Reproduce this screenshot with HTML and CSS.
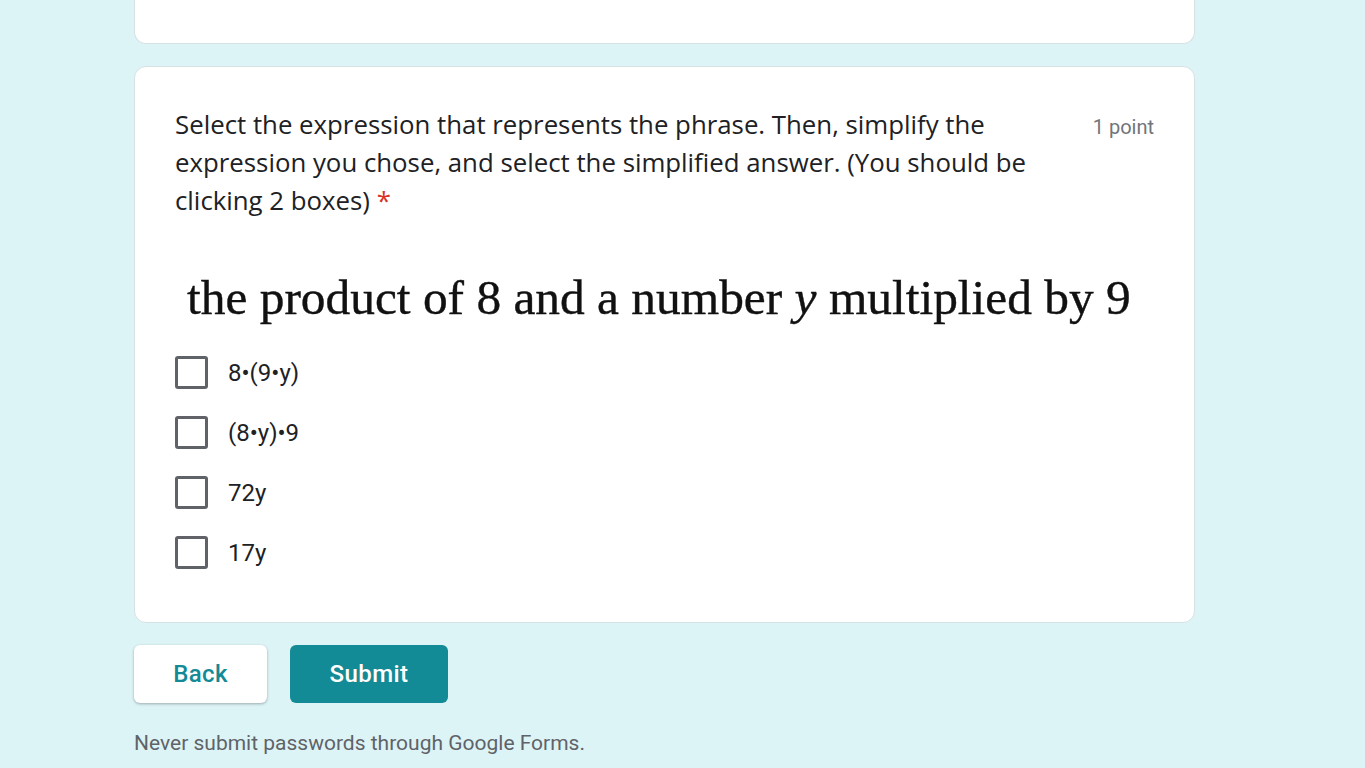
FILE: index.html
```html
<!DOCTYPE html>
<html>
<head>
<meta charset="utf-8">
<link rel="stylesheet" href="styles.css">
</head>
<body>
<div class="page">
  <div class="card card-top"></div>
  <div class="card question">
    <div class="q-head">
      <div class="q-title">Select the expression that represents the phrase. Then, simplify the expression you chose, and select the simplified answer. (You should be clicking 2 boxes) <span class="req">*</span></div>
      <div class="q-points">1 point</div>
    </div>
    <div class="q-image">the product of 8 and a number <i>y</i> multiplied by 9</div>
    <div class="options">
      <label class="option"><span class="box"></span><span class="opt-text">8•(9•y)</span></label>
      <label class="option"><span class="box"></span><span class="opt-text">(8•y)•9</span></label>
      <label class="option"><span class="box"></span><span class="opt-text">72y</span></label>
      <label class="option"><span class="box"></span><span class="opt-text">17y</span></label>
    </div>
  </div>
  <div class="actions">
    <button class="btn btn-back">Back</button>
    <button class="btn btn-submit">Submit</button>
  </div>
  <div class="footer">Never submit passwords through Google Forms.</div>
</div>
</body>
</html>
```

FILE: styles.css
```css
html, body {
  margin: 0;
  padding: 0;
  background: #ddf4f7;
  font-family: Roboto, "Noto Sans", sans-serif;
}
.page {
  width: 1061px;
  margin-left: 134px;
  display: flex;
  flex-direction: column;
  gap: 22px;
}
.card {
  background: #fff;
  border: 1px solid #d6e1e3;
  border-radius: 12px;
  box-sizing: border-box;
}
.card-top {
  height: 44px;
  border-top: none;
  border-radius: 0 0 12px 12px;
}
.question {
  height: 557px;
  padding: 38px 40px 0 40px;
}
.q-head {
  display: flex;
  justify-content: space-between;
  align-items: flex-start;
}
.q-title {
  width: 880px;
  font-family: "Open Sans", Roboto, sans-serif;
  font-size: 25.8px;
  line-height: 38px;
  color: #202124;
}
.req { color: #d93025; }
.q-points {
  font-size: 20px;
  color: #70757a;
  padding-top: 10px;
}
.q-image {
  margin-top: 49px;
  padding-left: 12px;
  font-family: "Liberation Serif", "DejaVu Serif", serif;
  font-size: 49.4px;
  line-height: 60px;
  color: #111;
  -webkit-text-stroke: 0.4px #111;
}
.options {
  margin-top: 28px;
  display: flex;
  flex-direction: column;
  gap: 27px;
}
.option {
  display: flex;
  align-items: center;
  gap: 20px;
  height: 33px;
}
.box {
  width: 33px;
  height: 33px;
  box-sizing: border-box;
  border: 3px solid #5f6368;
  border-radius: 3px;
}
.opt-text {
  font-size: 24px;
  color: #202124;
}
.actions {
  display: flex;
  gap: 23px;
}
.btn {
  height: 58px;
  border: none;
  border-radius: 6px;
  font-family: Roboto, "Open Sans", sans-serif;
  font-size: 24px;
  font-weight: 500;
  letter-spacing: 0.4px;
}
.btn-back {
  width: 133px;
  background: #fff;
  color: #138a95;
  box-shadow: 0 1px 3px rgba(0,0,0,0.3);
}
.btn-submit {
  width: 158px;
  background: #128b96;
  color: #fff;
}
.footer {
  margin-top: 6px;
  font-size: 21px;
  color: #5f6368;
}
```
